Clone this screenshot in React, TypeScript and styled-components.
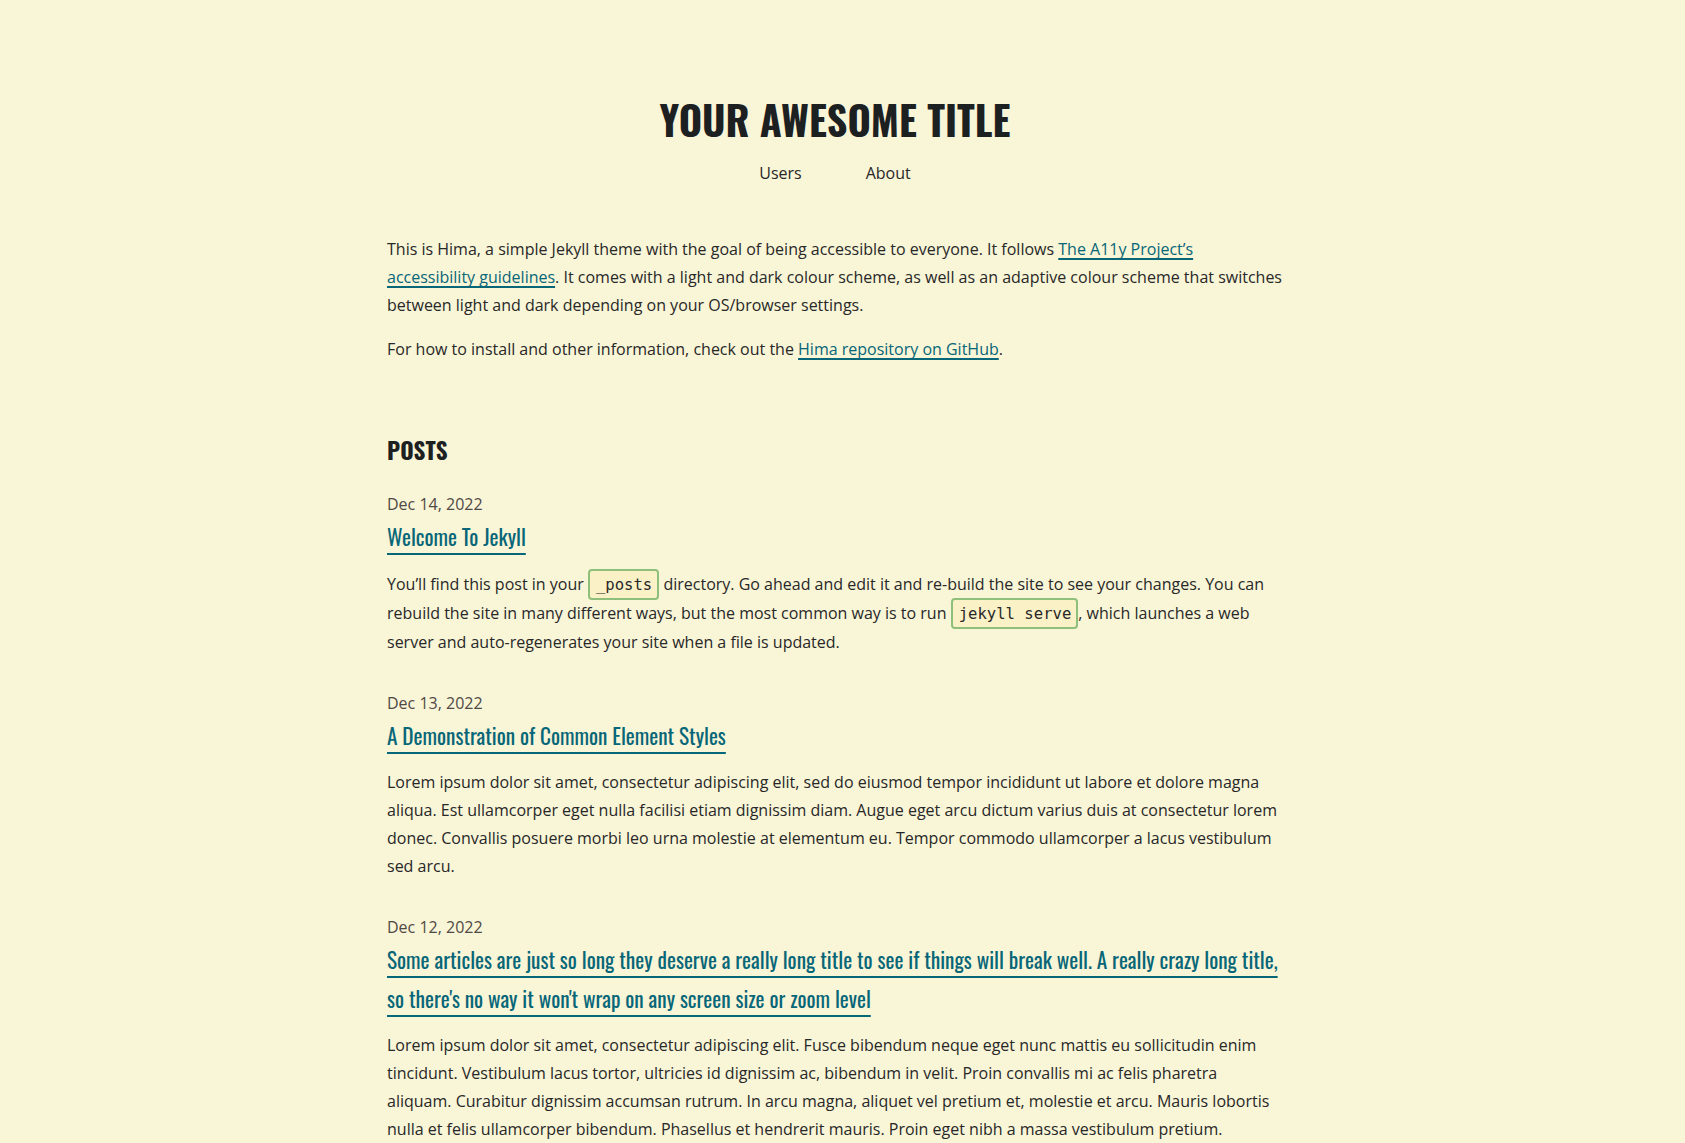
import React from "react";
import styled, { createGlobalStyle } from "styled-components";

const GlobalStyle = createGlobalStyle`
  html, body {
    margin: 0;
    padding: 0;
    background: #f9f5d7;
  }
  body {
    font-family: "Open Sans", "Noto Sans", sans-serif;
    font-size: 16px;
    line-height: 28px;
    color: #282828;
    padding-right: 15px;
  }
`;

const headingFont = `"Oswald", "Liberation Sans Narrow", "DejaVu Sans Condensed", "Roboto Condensed", sans-serif`;

const Page = styled.div`
  max-width: 896px;
  margin: 0 auto;
  padding: 0 0 40px;
`;

const Header = styled.header`
  display: flex;
  flex-direction: column;
  align-items: center;
  padding-top: 95px;
`;

const SiteTitle = styled.h1`
  margin: 0;
  font-family: ${headingFont};
  font-weight: 700;
  font-size: 40px;
  line-height: 48px;
  color: #1d2021;
  text-transform: uppercase;
`;

const Nav = styled.nav`
  display: flex;
  gap: 64px;
  margin-top: 16px;
`;

const NavLink = styled.a`
  color: #282828;
  text-decoration: none;
  font-size: 16px;
`;

const Intro = styled.section`
  margin-top: 48px;
`;

const Para = styled.p`
  margin: 0 0 16px;
`;

const TextLink = styled.a`
  color: #076678;
  text-decoration: underline;
  text-decoration-thickness: 2px;
  text-underline-offset: 3px;
  text-decoration-skip-ink: none;
`;

const PostsSection = styled.section`
  margin-top: 72px;
`;

const SectionTitle = styled.h2`
  margin: 0;
  font-family: ${headingFont};
  font-weight: 700;
  font-size: 23px;
  line-height: 30px;
  color: #1d2021;
  text-transform: uppercase;
`;

const PostList = styled.ul`
  list-style: none;
  margin: 25px 0 0;
  padding: 0;
  display: flex;
  flex-direction: column;
  gap: 33px;
`;

const PostItem = styled.li`
  display: flex;
  flex-direction: column;
`;

const PostDate = styled.time`
  font-size: 16px;
  line-height: 28px;
  color: #504945;
`;

const PostTitle = styled.h3`
  margin: 0;
  font-family: ${headingFont};
  font-weight: 400;
  font-size: 21.3px;
  line-height: 38.5px;
`;

const PostLink = styled.a`
  color: #076678;
  text-decoration: underline;
  text-decoration-thickness: 2px;
  text-underline-offset: 7px;
  text-decoration-skip-ink: none;
`;

const Excerpt = styled.p`
  margin: 13px 0 0;
`;

const Code = styled.code`
  font-family: "DejaVu Sans Mono", "Liberation Mono", monospace;
  font-size: 15.6px;
  background: #fbf1c7;
  border: 2px solid #8ec07c;
  border-radius: 4px;
  padding: 5px 5px 4px 6px;
  color: #282828;
`;

type Post = {
  date: string;
  title: string;
  excerpt: React.ReactNode;
};

const posts: Post[] = [
  {
    date: "Dec 14, 2022",
    title: "Welcome To Jekyll",
    excerpt: (
      <>
        You’ll find this post in your <Code>_posts</Code> directory. Go ahead and edit it and
        re-build the site to see your changes. You can rebuild the site in many different ways, but
        the most common way is to run <Code>jekyll serve</Code>, which launches a web server and
        auto-regenerates your site when a file is updated.
      </>
    ),
  },
  {
    date: "Dec 13, 2022",
    title: "A Demonstration of Common Element Styles",
    excerpt:
      "Lorem ipsum dolor sit amet, consectetur adipiscing elit, sed do eiusmod tempor incididunt ut labore et dolore magna aliqua. Est ullamcorper eget nulla facilisi etiam dignissim diam. Augue eget arcu dictum varius duis at consectetur lorem donec. Convallis posuere morbi leo urna molestie at elementum eu. Tempor commodo ullamcorper a lacus vestibulum sed arcu.",
  },
  {
    date: "Dec 12, 2022",
    title:
      "Some articles are just so long they deserve a really long title to see if things will break well. A really crazy long title, so there's no way it won't wrap on any screen size or zoom level",
    excerpt:
      "Lorem ipsum dolor sit amet, consectetur adipiscing elit. Fusce bibendum neque eget nunc mattis eu sollicitudin enim tincidunt. Vestibulum lacus tortor, ultricies id dignissim ac, bibendum in velit. Proin convallis mi ac felis pharetra aliquam. Curabitur dignissim accumsan rutrum. In arcu magna, aliquet vel pretium et, molestie et arcu. Mauris lobortis nulla et felis ullamcorper bibendum. Phasellus et hendrerit mauris. Proin eget nibh a massa vestibulum pretium.",
  },
];

export default function App() {
  return (
    <>
      <GlobalStyle />
      <Page>
        <Header>
          <SiteTitle>Your awesome title</SiteTitle>
          <Nav>
            <NavLink href="#">Users</NavLink>
            <NavLink href="#">About</NavLink>
          </Nav>
        </Header>
        <main>
          <Intro>
            <Para>
              This is Hima, a simple Jekyll theme with the goal of being accessible to everyone. It
              follows <TextLink href="#">The A11y Project’s accessibility guidelines</TextLink>. It
              comes with a light and dark colour scheme, as well as an adaptive colour scheme that
              switches between light and dark depending on your OS/browser settings.
            </Para>
            <Para>
              For how to install and other information, check out the{" "}
              <TextLink href="#">Hima repository on GitHub</TextLink>.
            </Para>
          </Intro>
          <PostsSection>
            <SectionTitle>Posts</SectionTitle>
            <PostList>
              {posts.map((p) => (
                <PostItem key={p.date}>
                  <PostDate>{p.date}</PostDate>
                  <PostTitle>
                    <PostLink href="#">{p.title}</PostLink>
                  </PostTitle>
                  <Excerpt>{p.excerpt}</Excerpt>
                </PostItem>
              ))}
            </PostList>
          </PostsSection>
        </main>
      </Page>
    </>
  );
}
